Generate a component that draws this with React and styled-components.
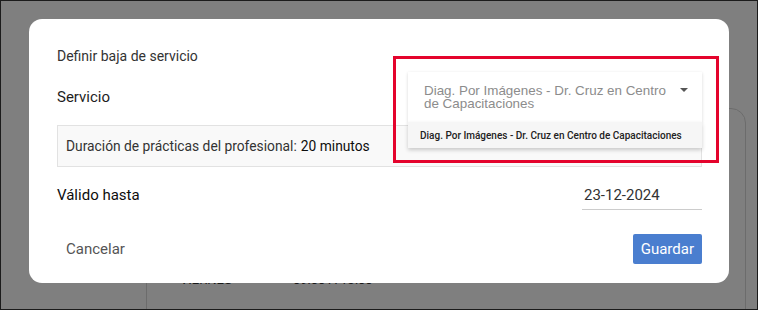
import React from 'react';
import styled, { createGlobalStyle } from 'styled-components';

const GlobalStyle = createGlobalStyle`
  html, body {
    margin: 0;
    padding: 0;
    background: #ffffff;
  }
  * {
    box-sizing: border-box;
  }
`;

const Page = styled.div`
  position: relative;
  width: 758px;
  height: 310px;
  overflow: hidden;
  border: 1px solid #1b1b1b;
  background: #ffffff;
  padding: 107px 11px 0 145px;
  font-family: Roboto, 'Liberation Sans', Arial, sans-serif;
`;

/* page content behind the dialog: only the last row peeks out */
const ScheduleCard = styled.div`
  height: 260px;
  border: 1px solid #d8d8d8;
  border-radius: 15px;
  padding-top: 152px;
`;

const DayRow = styled.div`
  display: flex;
  height: 36px;
  align-items: center;
  padding-left: 33px;
  font-size: 13px;
  color: #333;
  text-transform: uppercase;
`;

const DayName = styled.span`
  width: 113px;
`;

const Overlay = styled.div`
  position: absolute;
  inset: 0;
  background: rgba(0, 0, 0, 0.5);
  display: flex;
  justify-content: center;
  align-items: flex-start;
  padding: 18px 0 0 0;
`;

const Dialog = styled.div`
  width: 700px;
  background: #ffffff;
  border-radius: 13px;
  padding: 27px 27px 19px 28px;
  display: flex;
  flex-direction: column;
`;

const Title = styled.h2`
  margin: 0;
  font-size: 14px;
  line-height: 20px;
  font-weight: 400;
  color: #333;
`;

const FieldRow = styled.div`
  display: flex;
  align-items: center;
  justify-content: space-between;
  margin-top: ${props => props.gap || 0}px;
`;

const Label = styled.span`
  font-size: 15px;
  color: ${props => (props.strong ? '#0d0d0d' : '#1e1e1e')};
`;

const SelectWrap = styled.div`
  position: relative;
  width: 294px;
`;

const SelectBox = styled.div`
  height: 50px;
  display: flex;
  align-items: center;
  padding: 0 14px 0 16px;
  background: #fff;
  box-shadow: 0 1px 3px rgba(0, 0, 0, 0.16);

  svg {
    margin-left: auto;
    align-self: flex-start;
    margin-top: 16px;
  }
`;

const SelectText = styled.span`
  flex: none;
  width: 250px;
  font-family: 'Liberation Sans', Arial, sans-serif;
  font-size: 13.4px;
  line-height: 13px;
  color: #8c8c8c;
`;

const Menu = styled.ul`
  position: absolute;
  top: 100%;
  left: 0;
  right: 0;
  margin: 0;
  padding: 0;
  list-style: none;
  background: #f6f6f6;
  box-shadow: 0 2px 4px rgba(0, 0, 0, 0.2);
  z-index: 2;
`;

const MenuItem = styled.li`
  height: 26px;
  display: flex;
  align-items: center;
  padding-left: 12px;
  font-size: 10px;
  font-weight: 500;
  color: #222;
  white-space: nowrap;
`;

const InfoBox = styled.div`
  margin-top: 3px;
  height: 42px;
  display: flex;
  align-items: center;
  padding-left: 8px;
  background: #f9f9f9;
  border: 1px solid #e2e2e2;
  font-size: 13.8px;
  color: #333;
`;

const InfoValue = styled.span`
  margin-left: 4px;
  color: #0d0d0d;
`;

const DateInput = styled.div`
  width: 120px;
  height: 30px;
  display: flex;
  align-items: center;
  padding-left: 2px;
  border-bottom: 1px solid #cccccc;
  font-size: 15px;
  color: #333;
`;

const Footer = styled.div`
  display: flex;
  justify-content: space-between;
  align-items: center;
  margin-top: 24px;
`;

const Button = styled.button`
  height: 30px;
  padding: 0 ${props => (props.primary ? 8 : 9)}px;
  border: none;
  border-radius: 2px;
  font-family: Roboto, 'Liberation Sans', Arial, sans-serif;
  font-size: 15px;
  cursor: pointer;
  background: ${props => (props.primary ? '#4a7ecf' : 'transparent')};
  color: ${props => (props.primary ? '#ffffff' : '#555')};
`;

const Highlight = styled.div`
  position: absolute;
  left: 392px;
  top: 55px;
  width: 326px;
  height: 107px;
  border: 3px solid #e4032c;
  pointer-events: none;
`;

const Caret = () => (
  <svg width="8" height="4" viewBox="0 0 8 4">
    <path d="M0 0h8L4 4z" fill="#555" />
  </svg>
);

const servicio = 'Diag. Por Imágenes - Dr. Cruz en Centro de Capacitaciones';

const App = () => {
  return (
    <Page>
      <GlobalStyle />
      <ScheduleCard>
        <DayRow>
          <DayName>Viernes</DayName>
          <span>09:00 a 13:00</span>
        </DayRow>
      </ScheduleCard>

      <Overlay>
        <Dialog>
          <Title>Definir baja de servicio</Title>

          <FieldRow gap={6}>
            <Label>Servicio</Label>
            <SelectWrap>
              <SelectBox>
                <SelectText>{servicio}</SelectText>
                <Caret />
              </SelectBox>
              <Menu>
                <MenuItem>{servicio}</MenuItem>
              </Menu>
            </SelectWrap>
          </FieldRow>

          <InfoBox>
            Duración de prácticas del profesional:
            <InfoValue>20 minutos</InfoValue>
          </InfoBox>

          <FieldRow gap={13}>
            <Label strong>Válido hasta</Label>
            <DateInput>23-12-2024</DateInput>
          </FieldRow>

          <Footer>
            <Button>Cancelar</Button>
            <Button primary>Guardar</Button>
          </Footer>
        </Dialog>
      </Overlay>

      <Highlight />
    </Page>
  );
};

export default App;
